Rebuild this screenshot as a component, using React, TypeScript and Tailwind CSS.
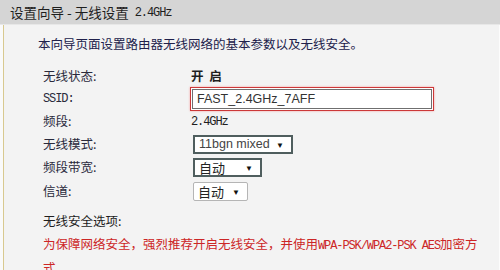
import React from "react";

const cjk = "font-['Noto_Sans_CJK_SC',sans-serif]";
const mono = "font-['Liberation_Mono','Noto_Sans_CJK_SC',monospace] tracking-[-1.1px]";

function Label({ children }: { children: React.ReactNode }) {
  return <div className={`${cjk} text-[12.5px] text-[#2a2a3c] w-[148px] shrink-0`}>{children}</div>;
}

function Select({ value, width, focused, latin }: { value: string; width: string; focused?: boolean; latin?: boolean }) {
  return (
    <div
      className={`${width} h-[19px] flex items-center justify-between bg-white pl-[4px] pr-[7px] ${
        focused ? "border-2 border-[#4f5e5e]" : "border border-[#b5b5b5] rounded-[2px]"
      }`}
    >
      <span
        className={`${latin ? "font-['Liberation_Sans',sans-serif] text-[12.5px] text-[#444]" : `${cjk} text-[13px] text-[#222]`} leading-none`}
      >
        {value}
      </span>
      <span className="text-[8px] text-[#111] leading-none">▼</span>
    </div>
  );
}

export default function App() {
  return (
    <div className="w-[500px] h-[270px] overflow-hidden bg-[#f3f3f3] flex flex-col">
      <div className="h-[25px] shrink-0 bg-[#d5d5d5] border-b border-[#e7e7e7] pl-[10px] flex items-center pt-[1px]">
        <span className={`${cjk} text-[13.5px] text-[#1e1e1e] leading-none`}>设置向导 - 无线设置</span>
        <span className={`${mono} text-[12px] text-[#1e1e1e] ml-[6px] leading-none`}>2.4GHz</span>
      </div>
      <div className="flex-1 flex">
        <div className="w-[3px] shrink-0 bg-[#fafafa]" />
        <div className="w-[1px] shrink-0 bg-[#d8c98f]" />
        <div className="flex-1 flex flex-col pt-[9px] border-r border-[#fcfcfc]">
          <div className={`${cjk} text-[12.5px] leading-[20px] text-[#20204a] pl-[34px]`}>
            本向导页面设置路由器无线网络的基本参数以及无线安全。
          </div>
          <div className="flex flex-col pl-[39px] mt-[11px]">
            <div className="h-[23px] flex items-center">
              <Label>无线状态:</Label>
              <span className={`${cjk} text-[12.5px] text-[#1e1e1e] font-bold whitespace-pre`}>开  启</span>
            </div>
            <div className="h-[22px] flex items-center">
              <div className={`${mono} text-[12px] text-[#2a2a3c] w-[147px] shrink-0`}>SSID:</div>
              <div className="w-[244px] h-[24px] border border-[#cc3838] shadow-[0_0_2px_#f5a0a0] p-[1px] bg-white">
                <div className="h-full border border-[#6f6f6f] flex items-center pl-[4px]">
                  <span className="font-['Liberation_Sans',sans-serif] text-[12.5px] text-[#333] leading-none">
                    FAST_2.4GHz_7AFF
                  </span>
                </div>
              </div>
            </div>
            <div className="h-[23px] flex items-center">
              <Label>频段:</Label>
              <span className={`${mono} text-[12px] text-[#1e1e1e]`}>2.4GHz</span>
            </div>
            <div className="h-[23px] flex items-center">
              <Label>无线模式:</Label>
              <div className="ml-[2px]">
                <Select value="11bgn mixed" width="w-[100px]" focused latin />
              </div>
            </div>
            <div className="h-[23px] flex items-center">
              <Label>频段带宽:</Label>
              <div className="ml-[2px]">
                <Select value="自动" width="w-[69px]" focused />
              </div>
            </div>
            <div className="h-[25px] flex items-center">
              <Label>信道:</Label>
              <div className="ml-[2px]">
                <Select value="自动" width="w-[55px]" />
              </div>
            </div>
            <div className={`${cjk} text-[12.5px] leading-[20px] text-[#1e1e1e] mt-[7px]`}>无线安全选项:</div>
            <div className={`${cjk} text-[12.5px] leading-[21px] text-[#cc2626] mt-[2px]`}>
              <div className="whitespace-nowrap">
                为保障网络安全，强烈推荐开启无线安全，并使用
                <span className={`${mono} text-[12px]`}>WPA-PSK/WPA2-PSK AES</span>
                加密方
              </div>
              <div>式。</div>
            </div>
          </div>
        </div>
      </div>
    </div>
  );
}
